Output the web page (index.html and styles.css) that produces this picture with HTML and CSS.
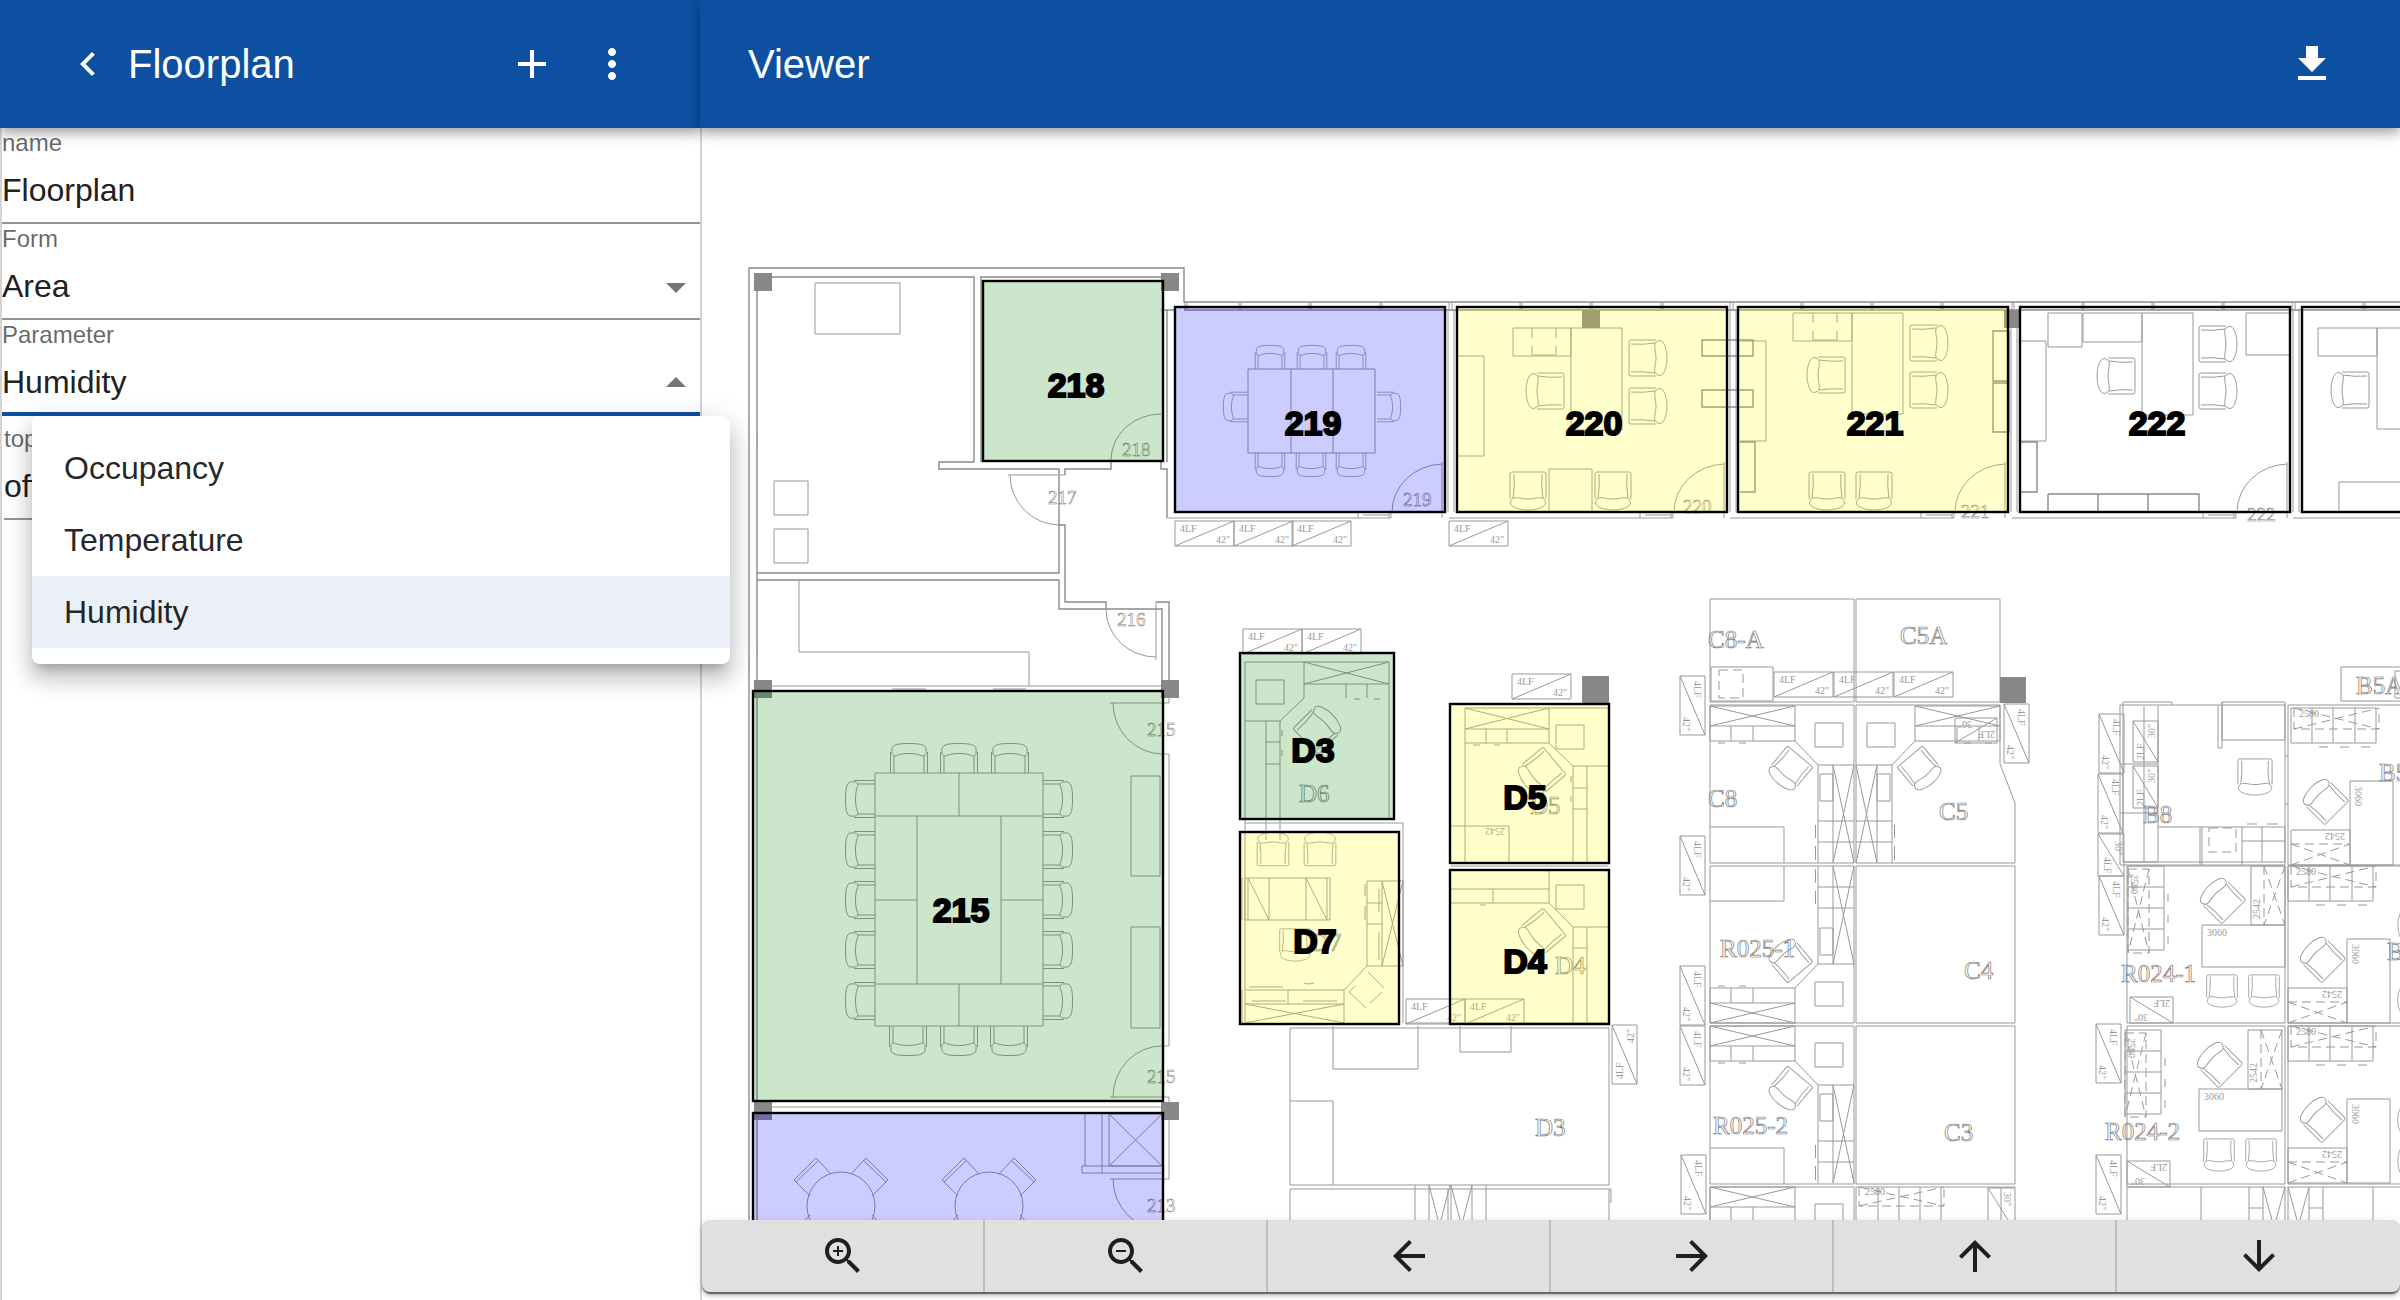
FILE: index.html
```html
<!DOCTYPE html>
<html lang="en">
<head>
<meta charset="utf-8">
<title>Floorplan</title>
<link rel="stylesheet" href="styles.css">
</head>
<body>
<div class="app">
  <section class="panel">
    <header class="bar bar-side">
      <button class="icon-btn" aria-label="Back"><svg class="icon" viewBox="0 0 24 24"><path d="M15.41 7.41L14 6l-6 6 6 6 1.41-1.41L10.83 12z"/></svg></button>
      <h1 class="title">Floorplan</h1>
      <div class="actions">
        <button class="icon-btn" aria-label="Add"><svg class="icon" viewBox="0 0 24 24"><path d="M19 13h-6v6h-2v-6H5v-2h6V5h2v6h6v2z"/></svg></button>
        <button class="icon-btn" aria-label="More"><svg class="icon" viewBox="0 0 24 24"><path d="M12 8c1.1 0 2-.9 2-2s-.9-2-2-2-2 .9-2 2 .9 2 2 2zm0 2c-1.1 0-2 .9-2 2s.9 2 2 2 2-.9 2-2-.9-2-2-2zm0 6c-1.1 0-2 .9-2 2s.9 2 2 2 2-.9 2-2-.9-2-2-2z"/></svg></button>
      </div>
    </header>
    <form class="form">
      <div class="field">
        <label for="name">name</label>
        <div class="control"><input id="name" type="text" value="Floorplan"></div>
      </div>
      <div class="field">
        <label for="form">Form</label>
        <div class="control">
          <select id="form"><option>Area</option></select>
          <svg class="icon arrow" viewBox="0 0 24 24"><path d="M7 10l5 5 5-5z"/></svg>
        </div>
      </div>
      <div class="field open">
        <label for="parameter">Parameter</label>
        <div class="control">
          <select id="parameter"><option>Humidity</option><option>Occupancy</option><option>Temperature</option></select>
          <svg class="icon arrow" viewBox="0 0 24 24"><path d="M7 14l5-5 5 5z"/></svg>
        </div>
        <ul class="menu" role="listbox" aria-label="Parameter">
          <li class="option" role="option">Occupancy</li>
          <li class="option" role="option">Temperature</li>
          <li class="option selected" role="option" aria-selected="true">Humidity</li>
        </ul>
      </div>
      <div class="field nested">
        <label for="topic">topic</label>
        <div class="control"><input id="topic" type="text" value="office"></div>
      </div>
    </form>
  </section>

  <main class="panel">
    <header class="bar bar-main">
      <h2 class="title">Viewer</h2>
      <div class="actions">
        <button class="icon-btn" aria-label="Download"><svg class="icon" viewBox="0 0 24 24"><path d="M19 9h-4V3H9v6H5l7 7 7-7zM5 18v2h14v-2H5z"/></svg></button>
      </div>
    </header>
    <div class="viewer">
      <div class="canvas">
        <svg class="plan" viewBox="702 128 1698 1092" preserveAspectRatio="xMinYMin slice" role="img" aria-label="Floor plan">
          <defs>
            <g id="chair">
              <path d="M8-18H-17Q-19-18-19-16V16Q-19 18-17 18H8M-17-14Q-5-13 7-15M-17 14Q-5 13 7 15"/>
              <path d="M10-17C16-20 19-8 19 0C19 8 16 20 10 17C4 15 8 8 8 0C8-8 4-15 10-17Z"/>
            </g>
            <g id="tucked">
              <path d="M-15 0V-17M15 0V-17"/>
              <path d="M-18.5 0V-21M18.5 0V-21M-17-24C-17-29-8-29.500 0-29.500C8-29.500 17-29 17-24C18-17 15-16 11-18C5-20-5-20-11-18C-15-16-18-17-17-24Z"/>
            </g>
            <g id="file">
              <path d="M0 0H59V25H0ZM0 25L59 0"/>
              <text class="tiny" x="5" y="11">4LF</text><text class="tiny" x="41" y="22">42"</text>
            </g>
            <g id="pod">
              <path d="M0 0H85V20H0ZM0 0L85 20M0 20L85 0M0 20V35H85V20M21 20V35M43 20V35M85 35L108 59H144M105 17H133V41H105ZM108 59V157M123 59V157M123 59L144 157M144 59L123 157M108 115H144M108 136H144M110 68H123V95H110ZM105.500 119V132M105.500 140V154M8 37H15M29 37H36"/>
              <use href="#chair" transform="translate(79 64) rotate(130) scale(.92)"/>
            </g>
            <g id="drawers">
              <path d="M0 0H85V35H0ZM21 0V35M42 0V35M64 0V35M28 39H37M49 39H58M70 39H79M59 73H102V157H59ZM0 122H59V157H0Z"/>
              <path class="dash" d="M3 0V21H88V0M3 0L88 21M3 21L88 0M0 136H59M0 136L59 157M0 157L59 136"/>
              <text class="tiny" x="8" y="9">2580</text>
              <text class="tiny" transform="translate(64 78) rotate(90)">3060</text>
              <text class="tiny" transform="translate(54 125) rotate(180)">2542</text>
              <use href="#chair" transform="translate(33 92) rotate(-135) scale(.95)"/>
            </g>
            <g id="bay">
              <path d="M1 0H37V84H1ZM1 21H37M1 42H37M1 63H37M124 0H158V59H124ZM75 59H158V101H75ZM3 131H46V157H3ZM3 131L46 157M41 28V36M41 49V57M41 70V78"/>
              <path class="dash" d="M1 3H22V87H1ZM1 3L22 87M22 3L1 87M137 0V59M137 0L158 59M158 0L137 59"/>
              <text class="tiny" transform="translate(4 8) rotate(90)">2580</text>
              <text class="tiny" transform="translate(133 53) rotate(-90)">2542</text>
              <text class="tiny" x="80" y="70">3060</text>
              <text class="tiny" transform="translate(43 134) rotate(180)">2LF</text>
              <text class="tiny" transform="translate(21 148) rotate(180)">30"</text>
              <use href="#chair" transform="translate(94 33) rotate(-135) scale(.95)"/>
              <use href="#chair" transform="translate(95 125) rotate(90) scale(.85)"/>
              <use href="#chair" transform="translate(137 125) rotate(90) scale(.85)"/>
            </g>
            <g id="roundtable">
              <circle r="34"/>
              <path d="M-10-32L-25-48L-47-26L-31-10M-22-46L-45-24M10-32L25-48L47-26L31-10M22-46L45-24M-31 9L-40 19M31 9L40 19"/>
            </g>
            <g id="front">
              <path d="M-8 518H216V512M183 512V518M188 515H214M214 512V518M267 462V518M217 512A52 48 0 0 1 267 464M273 310V512M279 310V512"/>
            </g>
          </defs>

          <g class="walls">
            <!-- outer shell and north-west rooms -->
            <path class="shell" d="M749 1220V268H1184V302H2400M1184 310H2400M757 1220V291M772 277H974V462H939V469H1059V573H757M981 462V277H1161M1065 475V469H1111V462M1059 525H1065V602H1106V609M757 580H1059V609H1162V680M1156 602H1169V680M1161 462V469H1167V518M1167 310V462M1161 310H1176"/>
            <path d="M1008 475H1065M1010 475A50 50 0 0 0 1059 525M1106 609A50 48 0 0 0 1156 657M1156 660V602M1111 460A50 46 0 0 1 1161 414"/>
            <path d="M815 283H900V334H815ZM774 481H808V515H774ZM774 529H808V563H774ZM799 580V652H1029V686M772 686H1161M892 689H926M993 689H1026"/>
            <path d="M1110 703H1169V698M1113 703A50 51 0 0 0 1162 754H1169V1046H1162A49 51 0 0 0 1113 1097M1110 1097H1169V1179H1110M1113 1179A50 51 0 0 0 1162 1230M772 1107H1161"/>
            <!-- window mullions -->
            <path d="M1185 302V310M1187 302V310M1239 302V310M1241 302V310M1309 302V310M1311 302V310M1380 302V310M1382 302V310M1449 302V310M1452 302V310M1520 302V310M1522 302V310M1590 302V310M1592 302V310M1661 302V310M1663 302V310M1730 302V310M1733 302V310M1801 302V310M1803 302V310M1871 302V310M1873 302V310M1941 302V310M1943 302V310M2012 302V310M2014 302V310M2082 302V310M2084 302V310M2152 302V310M2154 302V310M2222 302V310M2224 302V310M2292 302V310M2295 302V310M2363 302V310M2365 302V310"/>
            <use href="#front" x="1175"/><use href="#front" x="1457"/><use href="#front" x="1738"/><use href="#front" x="2020"/><use href="#front" x="2301"/>

            <!-- 219 -->
            <path d="M1248 369H1375V453H1248ZM1291 369V453M1333 369V453"/>
            <use href="#tucked" transform="translate(1270 369) scale(.8)"/><use href="#tucked" transform="translate(1312 369) scale(.8)"/><use href="#tucked" transform="translate(1351 369) scale(.8)"/>
            <use href="#tucked" transform="translate(1270 453) rotate(180) scale(.8)"/><use href="#tucked" transform="translate(1311 453) rotate(180) scale(.8)"/><use href="#tucked" transform="translate(1351 453) rotate(180) scale(.8)"/>
            <use href="#tucked" transform="translate(1247 407) rotate(-90) scale(.8)"/><use href="#tucked" transform="translate(1377 407) rotate(90) scale(.8)"/>

            <!-- 220 -->
            <path d="M1458 356H1484V456H1458M1513 328H1571V356H1513ZM1571 328H1622V430H1571ZM1532 328V338M1556 328V338M1532 346V355H1556V346M1549 512V469H1592V512"/>
            <path class="solid" d="M1702 340H1753V356H1702ZM1702 390H1753V407H1702Z"/>
            <use href="#chair" x="1648" y="358"/><use href="#chair" x="1648" y="406"/>
            <use href="#chair" transform="translate(1545 391) rotate(180)"/>
            <use href="#chair" transform="translate(1528 491) rotate(90)"/><use href="#chair" transform="translate(1613 491) rotate(90)"/>

            <!-- 221 -->
            <path d="M1740 341H1766V441H1740M1793 313H1852V341H1793ZM1852 313H1903V414H1852ZM1813 313V323M1837 313V323M1813 331V340H1837V331"/>
            <path class="solid" d="M1740 442H1755V492H1740M1993 331H2009V381H1993ZM1993 383H2009V432H1993Z"/>
            <use href="#chair" x="1929" y="343"/><use href="#chair" x="1929" y="390"/>
            <use href="#chair" transform="translate(1826 375) rotate(180)"/>
            <use href="#chair" transform="translate(1827 491) rotate(90)"/><use href="#chair" transform="translate(1874 491) rotate(90)"/>

            <!-- 222 and 223 -->
            <path d="M2018 341H2046V441H2018M2048 313H2082V347H2048ZM2083 313H2142V342H2083ZM2142 313H2193V415H2142ZM2246 313V355H2290M2246 313H2290M2318 328H2377V356H2318ZM2400 328H2377V429H2400M2339 512V482H2400"/>
            <path class="solid" d="M2021 442H2037V492H2021M2048 494H2199V512M2048 494V512M2098 494V512M2148 494V512"/>
            <use href="#chair" x="2218" y="344"/><use href="#chair" x="2218" y="391"/>
            <use href="#chair" transform="translate(2116 376) rotate(180)"/><use href="#chair" transform="translate(2350 390) rotate(180)"/>

            <!-- 215 -->
            <path d="M875 773H1043V1026H875ZM875 816H1043M875 984H1043M917 816V984M1001 816V984M959 773V816M959 984V1026M875 900H917M1001 900H1043M1131 776H1160V876H1131ZM1131 927H1160V1028H1131Z"/>
            <use href="#tucked" x="909" y="773"/><use href="#tucked" x="959" y="773"/><use href="#tucked" x="1010" y="773"/>
            <g transform="rotate(180 959 1026)"><use href="#tucked" x="909" y="1026"/><use href="#tucked" x="959" y="1026"/><use href="#tucked" x="1010" y="1026"/></g>
            <g transform="translate(875 900) rotate(-90)"><use href="#tucked" x="-101"/><use href="#tucked" x="-50"/><use href="#tucked"/><use href="#tucked" x="50"/><use href="#tucked" x="101"/></g>
            <g transform="translate(1043 900) rotate(90)"><use href="#tucked" x="-101"/><use href="#tucked" x="-50"/><use href="#tucked"/><use href="#tucked" x="50"/><use href="#tucked" x="101"/></g>

            <!-- 213 -->
            <path d="M1085 1114V1166M1102 1114V1173M1082 1166H1161M1082 1166V1173H1161M1109 1114H1162V1166H1109ZM1109 1114L1162 1166M1162 1114L1109 1166"/>
            <use href="#roundtable" x="841" y="1206"/><use href="#roundtable" x="989" y="1206"/>

            <!-- D block -->
            <path d="M1245 823V662H1389V819M1245 721H1280L1304 698V662M1256 680H1284V704H1256ZM1304 684H1389M1304 662L1389 684M1389 662L1304 684M1346 684V698M1367 684V698M1354 699H1360M1374 699H1380M1266 721V840M1280 721V840M1266 742H1280M1266 764H1280M1282 730V736M1282 750V756"/>
            <use href="#chair" transform="translate(1319 728) rotate(-45)"/>
            <path d="M1608 708H1465V863M1465 729H1549M1549 708V743M1465 708L1549 729M1549 708L1465 729M1465 743H1549L1573 766H1608M1486 729V743M1507 729V743M1473 745H1480M1494 745H1500M1556 725H1584V749H1556ZM1573 766V863M1587 766V863M1573 788H1587M1573 809H1587M1571 776V782M1571 796V802M1450 826H1509V863"/>
            <use href="#chair" transform="translate(1540 773) rotate(140)"/>
            <path d="M1451 889H1549M1549 870V903M1451 903H1549L1573 927H1608M1493 889V903M1480 905H1486M1556 885H1584V909H1556ZM1573 927V1024M1587 927V1024M1573 948H1587M1451 866H1608"/>
            <use href="#chair" transform="translate(1540 934) rotate(140)"/>
            <path d="M1245 1023V823H1403V1023M1245 878H1330V920H1245ZM1248 878V920M1269 878V920L1248 878M1306 878V920M1306 878L1327 920V878M1367 881H1403V966H1367ZM1382 881V966M1367 903H1382M1367 924H1382M1382 881L1403 966M1403 881L1382 966M1367 966L1344 990H1245M1245 1004H1344M1288 990V1004M1344 990V1023M1245 1004L1344 1023M1344 1004L1245 1023M1249 987H1283M1252 1001H1286M1303 1001H1337M1304 983Q1309 985 1314 983M1379 889V912M1379 932V960M1365 884V896M1365 906V920M1368 972L1384 988M1382 992L1370 1003M1366 1008L1349 992L1355 986M1242 878V920M1242 990V1023"/>
            <use href="#chair" transform="translate(1273 849) rotate(-90) scale(.88)"/><use href="#chair" transform="translate(1320 849) rotate(-90) scale(.88)"/><use href="#chair" transform="translate(1295 945) rotate(90) scale(.85)"/>
            <path d="M1290 1028H1609V1185H1290ZM1333 1026V1069H1418V1026M1460 1026V1052H1511V1026M1290 1101H1333V1185M1405 1023H1609M1290 1220V1189H1611V1203M1609 1189V1220M1415 1185V1220M1429 1185V1220M1448 1189V1220M1451 1185V1220M1472 1185V1220M1486 1185V1220M1429 1185L1438 1220M1450 1185L1441 1220M1451 1185L1460 1220M1472 1185L1463 1220"/>
            <use href="#file" x="1175" y="521"/><use href="#file" x="1234" y="521"/><use href="#file" x="1292" y="521"/><use href="#file" x="1449" y="521"/>
            <use href="#file" x="1243" y="629"/><use href="#file" x="1302" y="629"/><use href="#file" x="1512" y="674"/><use href="#file" x="1406" y="999"/><use href="#file" x="1465" y="999"/>
            <use href="#file" transform="translate(1612 1084) rotate(-90)"/>

            <!-- C block -->
            <path d="M1710 599H1854V702H1710ZM1856 599H2000V702H1856ZM1710 705H1854V863H1710ZM2000 764V705H1856V863H2015V803L2000 764M1710 866H1854V1023H1710ZM1856 866H2015V1023H1856ZM1710 1026H1854V1184H1710ZM1856 1026H2015V1184H1856ZM1710 1220V1187H1854V1220M1856 1220V1187H2015V1220M1711 667H1773V701H1711ZM1710 827H1784V863M1710 901H1784V866M1710 1148H1784V1184M1878 1187V1220M1899 1187V1220M1920 1187V1220M1941 1187V1220M1988 1188V1220M1988 1188H2014M1988 1188L2008 1220M2001 1188V1220M1955 718H1997V743H1955ZM1955 743L1997 718"/>
            <path class="dash" d="M1719 670H1743V698H1719ZM1859 1187V1206H1944V1187M1859 1187L1944 1206M1859 1206L1944 1187"/>
            <use href="#pod" x="1710" y="706"/><use href="#pod" x="1710" y="1026"/><use href="#pod" x="1710" y="1187"/>
            <g transform="translate(1710 1023) scale(1 -1)"><use href="#pod"/></g>
            <g transform="translate(2000 706) scale(-1 1)"><use href="#pod"/></g>
            <use href="#file" x="1774" y="672"/><use href="#file" x="1834" y="672"/><use href="#file" x="1894" y="672"/>
            <use href="#file" transform="translate(1705 676) rotate(90)"/><use href="#file" transform="translate(1705 836) rotate(90)"/><use href="#file" transform="translate(1705 966) rotate(90)"/><use href="#file" transform="translate(1705 1026) rotate(90)"/><use href="#file" transform="translate(1706 1155) rotate(90)"/><use href="#file" transform="translate(2029 704) rotate(90)"/>
            <text class="tiny" x="1865" y="1195">2580</text>
            <text class="tiny" transform="translate(1995 731) rotate(180)">2LF</text><text class="tiny" transform="translate(1972 721) rotate(180)">30"</text>
            <text class="tiny" transform="translate(2004 1192) rotate(90)">30"</text>

            <!-- B block -->
            <path d="M2120 705H2285V865H2120ZM2400 705H2288V865H2400M2127 866H2285V1023H2127ZM2400 866H2288V1023H2400M2127 1026H2285V1184H2127ZM2400 1026H2288V1184H2400M2123 702H2172V705M2123 702V862H2158V706M2144 706V862M2120 764H2158M2120 813H2158M2123 862H2285M2158 827H2285V862M2200 827V865M2202 827V865M2242 827V865M2262 827V841M2262 841V862M2242 841H2285M2222 740V702H2285V740ZM2218 705V748H2222V702M2133 721H2158V762H2133ZM2133 721L2158 762M2133 766H2158V808H2133ZM2133 766L2158 808M2247 824H2257M2267 824H2278M2400 667H2341V701H2400M2400 671H2395V698H2400M2098 834H2124V876H2098ZM2098 834L2124 876M2285 756H2288M2285 804H2288"/>
            <path class="dash" d="M2209 828H2236V852H2209Z"/>
            <path d="M2127 1220V1187H2285V1220M2400 1187H2288V1220M2201 1187V1220M2249 1187V1220M2263 1187V1220M2249 1208H2263M2263 1187L2272 1220M2285 1187L2276 1220M2288 1187L2297 1220M2309 1187L2300 1220M2309 1187V1220M2323 1187V1220M2309 1208H2323M2373 1187V1220"/>
            <use href="#chair" transform="translate(2255 777) rotate(90) scale(.95)"/>
            <use href="#bay" x="2127" y="866"/><use href="#bay" x="2124" y="1030"/>
            <use href="#drawers" x="2291" y="708"/><use href="#drawers" x="2288" y="866"/><use href="#drawers" x="2288" y="1026"/>
            <use href="#chair" transform="translate(2414 925) rotate(180) scale(.85)"/><use href="#chair" transform="translate(2414 1000) rotate(180) scale(.85)"/><use href="#chair" transform="translate(2414 1120) rotate(180) scale(.85)"/><use href="#chair" transform="translate(2414 1161) rotate(180) scale(.85)"/>
            <use href="#file" transform="translate(2124 714) rotate(90)"/><use href="#file" transform="translate(2123 774) rotate(90)"/><use href="#file" transform="translate(2124 876) rotate(90)"/><use href="#file" transform="translate(2121 1024) rotate(90)"/><use href="#file" transform="translate(2121 1155) rotate(90)"/>
            <text class="tiny" transform="translate(2155 738) rotate(-90)">30"</text><text class="tiny" transform="translate(2144 760) rotate(-90)">2LF</text>
            <text class="tiny" transform="translate(2155 783) rotate(-90)">30"</text><text class="tiny" transform="translate(2144 806) rotate(-90)">2LF</text>
            <text class="tiny" transform="translate(2115 841) rotate(90)">30"</text><text class="tiny" transform="translate(2104 857) rotate(90)">4LF</text>
            <text class="tiny" transform="translate(1505 828) rotate(180)">2542</text>
          </g>

          <g class="columns">
            <rect x="754" y="273" width="18" height="18"/><rect x="1161" y="273" width="18" height="18"/>
            <rect x="754" y="680" width="18" height="18"/><rect x="1161" y="680" width="18" height="18"/>
            <rect x="754" y="1102" width="18" height="18"/><rect x="1161" y="1102" width="18" height="18"/>
            <rect x="1582" y="310" width="18" height="18"/><rect x="2004" y="310" width="16" height="18"/>
            <rect x="1582" y="676" width="27" height="27"/><rect x="2000" y="677" width="26" height="26"/>
          </g>

          <g class="door-no">
            <text x="1122" y="456">218</text><text x="1048" y="504">217</text><text x="1117" y="626">216</text>
            <text x="1403" y="506">219</text><text x="1683" y="513">220</text><text x="1961" y="518">221</text><text x="2247" y="521">222</text>
            <text x="1147" y="736">215</text><text x="1147" y="1083">215</text><text x="1147" y="1212">213</text>
          </g>
          <g class="desk-no">
            <text x="1299" y="802">D6</text><text x="1530" y="814">D5</text><text x="1311" y="951">D7</text><text x="1555" y="974">D4</text><text x="1535" y="1136">D3</text>
            <text x="1708" y="648">C8-A</text><text x="1900" y="644">C5A</text><text x="1708" y="807">C8</text><text x="1939" y="820">C5</text>
            <text x="1720" y="957">R025-1</text><text x="1964" y="979">C4</text><text x="1713" y="1134">R025-2</text><text x="1944" y="1141">C3</text>
            <text x="2356" y="694">B5A</text><text x="2143" y="823">B8</text><text x="2379" y="781">B5</text><text x="2387" y="960">B4</text>
            <text x="2121" y="982">R024-1</text><text x="2105" y="1140">R024-2</text>
          </g>

          <g class="zones">
            <rect class="ok" x="983" y="281" width="180" height="180"/>
            <rect class="low" x="1175" y="307" width="270" height="205"/>
            <rect class="high" x="1457" y="307" width="270" height="205"/>
            <rect class="high" x="1738" y="307" width="270" height="205"/>
            <rect class="none" x="2020" y="307" width="270" height="205"/>
            <rect class="none" x="2302" y="307" width="270" height="205"/>
            <rect class="ok" x="753" y="691" width="410" height="410"/>
            <rect class="low" x="753" y="1113" width="410" height="205"/>
            <rect class="ok" x="1240" y="653" width="154" height="166"/>
            <rect class="high" x="1240" y="832" width="159" height="192"/>
            <rect class="high" x="1450" y="704" width="159" height="159"/>
            <rect class="high" x="1450" y="870" width="159" height="154"/>
          </g>
          <g class="zone-labels">
            <text x="1076" y="397">218</text><text x="1313" y="435">219</text><text x="1594" y="435">220</text><text x="1875" y="435">221</text><text x="2157" y="435">222</text>
            <text x="961" y="922">215</text><text x="1313" y="762">D3</text><text x="1315" y="953">D7</text><text x="1525" y="809">D5</text><text x="1525" y="973">D4</text>
          </g>
        </svg>
      </div>
      <div class="toolbar">
        <button class="tool" aria-label="Zoom in"><svg class="icon" viewBox="0 0 24 24"><path d="M15.5 14h-.79l-.28-.27C15.41 12.59 16 11.11 16 9.500 16 5.910 13.090 3 9.500 3S3 5.910 3 9.500 5.910 16 9.500 16c1.610 0 3.090-.59 4.230-1.570l.27.28v.79l5 4.990L20.490 19l-4.990-5zm-6 0C7.010 14 5 11.990 5 9.500S7.010 5 9.500 5 14 7.010 14 9.500 11.990 14 9.500 14zM12 10h-2v2H9v-2H7V9h2V7h1v2h2v1z"/></svg></button>
        <button class="tool" aria-label="Zoom out"><svg class="icon" viewBox="0 0 24 24"><path d="M15.5 14h-.79l-.28-.27C15.41 12.59 16 11.11 16 9.500 16 5.910 13.090 3 9.500 3S3 5.910 3 9.500 5.910 16 9.500 16c1.610 0 3.090-.59 4.230-1.570l.27.28v.79l5 4.990L20.490 19l-4.990-5zm-6 0C7.010 14 5 11.990 5 9.500S7.010 5 9.500 5 14 7.010 14 9.500 11.990 14 9.500 14zM7 9h5v1H7z"/></svg></button>
        <button class="tool" aria-label="Left"><svg class="icon" viewBox="0 0 24 24"><path d="M20 11H7.83l5.590-5.590L12 4l-8 8 8 8 1.410-1.410L7.830 13H20v-2z"/></svg></button>
        <button class="tool" aria-label="Right"><svg class="icon" viewBox="0 0 24 24"><path d="M12 4l-1.410 1.410L16.170 11H4v2h12.170l-5.580 5.590L12 20l8-8z"/></svg></button>
        <button class="tool" aria-label="Up"><svg class="icon" viewBox="0 0 24 24"><path d="M4 12l1.410 1.410L11 7.830V20h2V7.830l5.580 5.590L20 12l-8-8-8 8z"/></svg></button>
        <button class="tool" aria-label="Down"><svg class="icon" viewBox="0 0 24 24"><path d="M20 12l-1.410-1.410L13 16.170V4h-2v12.170l-5.580-5.590L4 12l8 8 8-8z"/></svg></button>
      </div>
    </div>
  </main>
</div>
</body>
</html>
```
FILE: styles.css
```css
* { box-sizing: border-box; }

body {
  margin: 0;
  background: #fff;
  color: rgba(0, 0, 0, .87);
  font-family: "Liberation Sans", Arial, sans-serif;
  font-size: 32px;
}

.app {
  display: grid;
  grid-template-columns: 7fr 17fr;
  height: 100vh;
  overflow: hidden;
}

.panel {
  display: flex;
  flex-direction: column;
  min-width: 0;
  min-height: 0;
}

/* app bars */
.bar {
  position: relative;
  z-index: 1;
  display: flex;
  flex: none;
  align-items: center;
  gap: 16px;
  height: 128px;
  padding: 0 64px;
  background: #0d50a1;
  color: #fff;
  box-shadow: 0 4px 8px -2px rgba(0, 0, 0, .2), 0 8px 10px rgba(0, 0, 0, .14), 0 2px 20px rgba(0, 0, 0, .12);
}
.bar-main { padding-left: 48px; }
.title { margin: 0; font-size: 40px; font-weight: 400; line-height: 48px; }
.actions { display: flex; gap: 32px; margin-left: auto; }

button {
  display: flex;
  align-items: center;
  justify-content: center;
  padding: 0;
  border: 0;
  background: none;
  color: inherit;
}
.icon { display: block; width: 48px; height: 48px; fill: currentColor; }

/* settings form */
.form { flex: 1; border-left: 2px solid #d4d4d4; }
.field { position: relative; }
.nested { margin: 8px 0 0 2px; }
.field label {
  display: block;
  color: rgba(0, 0, 0, .6);
  font-size: 24px;
  line-height: 30px;
}
.control { display: grid; }
.control > * { grid-area: 1 / 1; }
.control input,
.control select {
  width: 100%;
  height: 66px;
  margin: 0;
  padding: 0;
  border: 0;
  border-bottom: 2px solid #949494;
  border-radius: 0;
  outline: 0;
  background: none;
  color: #212121;
  font: inherit;
  appearance: none;
}
.open .control select { border-color: #0d50a1; box-shadow: inset 0 -2px #0d50a1; }
.arrow { place-self: center end; color: #757575; pointer-events: none; }

.menu {
  position: absolute;
  z-index: 2;
  top: 100%;
  left: 30px;
  width: 100%;
  margin: 0;
  padding: 16px 0;
  border-radius: 8px;
  background: #fff;
  list-style: none;
  box-shadow: 0 10px 10px -6px rgba(0, 0, 0, .2), 0 16px 20px 2px rgba(0, 0, 0, .14), 0 6px 28px 4px rgba(0, 0, 0, .12);
}
.option { padding: 0 32px; line-height: 72px; }
.selected { background: #ebeff7; }

/* viewer */
.viewer {
  display: flex;
  flex: 1;
  flex-direction: column;
  min-height: 0;
  padding-bottom: 8px;
  border-left: 2px solid #d4d4d4;
}
.canvas { flex: 1; min-height: 0; overflow: hidden; }
.plan { display: block; width: 100%; height: 100%; }

.walls { fill: none; stroke: #999; stroke-width: 1; }
.shell,
.solid { stroke: #8a8a8a; stroke-width: 1.4; }
.dash { stroke-dasharray: 9 5; }
.tiny {
  fill: #999;
  stroke: none;
  font-family: "Liberation Serif", serif;
  font-size: 10px;
}
.columns { fill: #888; }
.door-no,
.desk-no {
  fill: none;
  stroke: #777;
  stroke-width: .7;
  font-family: "Liberation Serif", serif;
}
.door-no { font-size: 19px; stroke-width: .5; }
.desk-no { font-size: 25px; }

.zones { stroke: #000; stroke-width: 2.4; }
.ok { fill: rgba(0, 128, 0, .2); }
.low { fill: rgba(0, 0, 255, .2); }
.high { fill: rgba(255, 255, 0, .2); }
.none { fill: none; }
.zone-labels {
  stroke: #000;
  stroke-width: 2;
  font-size: 34px;
  font-weight: 700;
  text-anchor: middle;
}

.toolbar {
  position: relative;
  display: grid;
  flex: none;
  grid-template-columns: repeat(6, 1fr);
  height: 72px;
  border-radius: 8px;
  background: #e0e0e0;
  box-shadow: 0 6px 2px -4px rgba(0, 0, 0, .2), 0 4px 4px rgba(0, 0, 0, .14), 0 2px 10px rgba(0, 0, 0, .12), 0 2px 1px rgba(0, 0, 0, .4);
}
.tool { color: #1f1f1f; }
.tool:not(:last-child) { border-right: 2px solid #bdbdbd; }
```
